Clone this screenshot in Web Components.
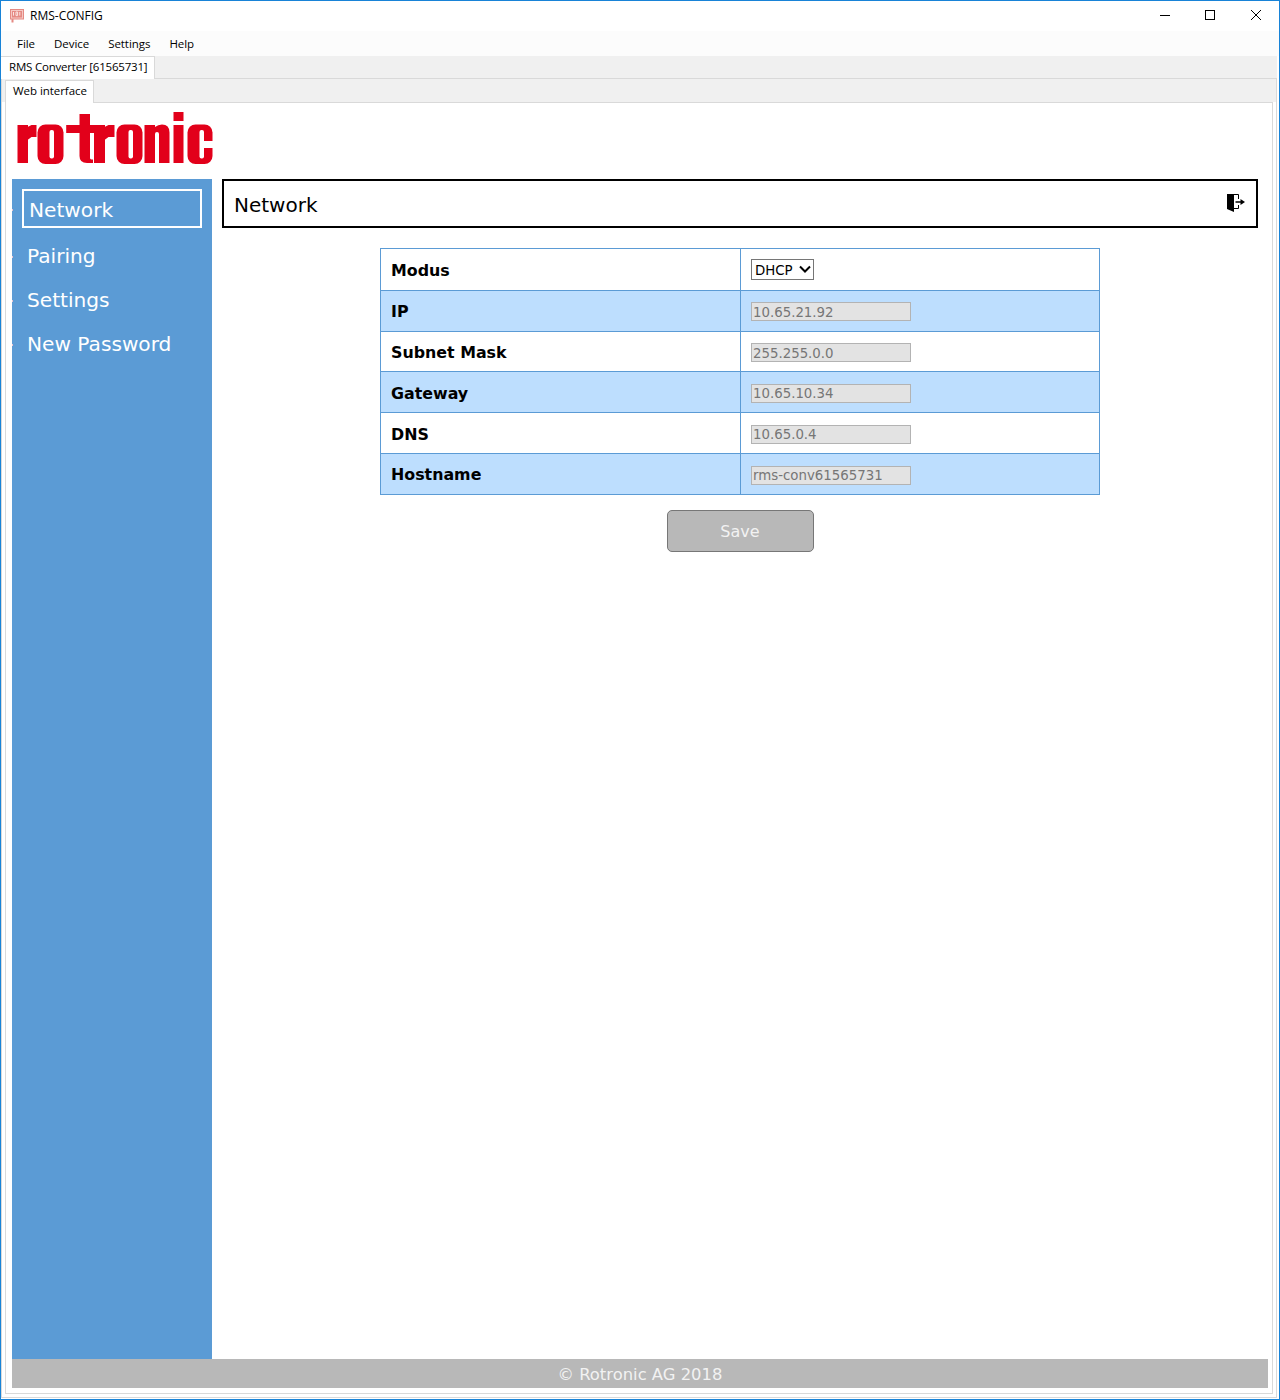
<!DOCTYPE html>
<html lang="en">
<head>
<meta charset="utf-8">
<title>RMS-CONFIG</title>
<style>
    html, body { margin: 0; padding: 0; background: #fff; }
</style>
</head>
<body>
<app-window>
    <title-bar slot="title">RMS-CONFIG</title-bar>
    <menu-bar slot="menu">
        <menu-item>File</menu-item>
        <menu-item>Device</menu-item>
        <menu-item>Settings</menu-item>
        <menu-item>Help</menu-item>
    </menu-bar>
    <tab-panel label="RMS Converter [61565731]" kind="outer">
        <tab-panel label="Web interface" kind="inner">
            <web-page>
                <rotronic-logo slot="logo"></rotronic-logo>
                <side-nav slot="nav">
                    <nav-item active>Network</nav-item>
                    <nav-item>Pairing</nav-item>
                    <nav-item>Settings</nav-item>
                    <nav-item>New Password</nav-item>
                </side-nav>
                <page-header slot="header">Network</page-header>
                <config-table>
                    <config-row label="Modus" style="--h:41px"><select-box>DHCP</select-box></config-row>
                    <config-row label="IP" alt style="--h:40px;--lp:0px"><value-box style="top:0;padding-top:2px">10.65.21.92</value-box></config-row>
                    <config-row label="Subnet Mask" style="--h:39px"><value-box style="padding-top:2px">255.255.0.0</value-box></config-row>
                    <config-row label="Gateway" alt style="--h:40px"><value-box>10.65.10.34</value-box></config-row>
                    <config-row label="DNS" style="--h:40px"><value-box>10.65.0.4</value-box></config-row>
                    <config-row label="Hostname" alt style="--h:40px;--lp:0px"><value-box>rms-conv61565731</value-box></config-row>
                </config-table>
                <save-button>Save</save-button>
                <page-footer slot="footer">© Rotronic AG 2018</page-footer>
            </web-page>
        </tab-panel>
    </tab-panel>
</app-window>

<script>
const UI_FONT = `"Open Sans", "Noto Sans", sans-serif`
const WEB_FONT = `"DejaVu Sans", Verdana, sans-serif`

class AppWindow extends HTMLElement {
    constructor() {
        super()
        this.attachShadow({mode: 'open'}).innerHTML = `
        <style>
            :host {
                display: flex;
                flex-direction: column;
                box-sizing: border-box;
                width: 1280px;
                height: 1400px;
                border: 1px solid #1883d7;
                background: #fff;
                overflow: hidden;
                font-family: ${UI_FONT};
            }
            .body { flex: 1; min-height: 0; display: flex; flex-direction: column; background: #fff; }
        </style>
        <slot name="title"></slot>
        <slot name="menu"></slot>
        <div class="body"><slot></slot></div>`
    }
}

class TitleBar extends HTMLElement {
    constructor() {
        super()
        this.attachShadow({mode: 'open'}).innerHTML = `
        <style>
            :host {
                display: flex;
                align-items: center;
                height: 30px;
                background: #fff;
                color: #000;
                font-size: 12px;
            }
            .app { width: 15px; height: 15px; margin: 0 5px 0 9px; }
            .text { flex: 1; position: relative; top: -1px; }
            .btn { width: 45px; height: 30px; margin-right: 1px; display: flex; align-items: center; justify-content: center; position: relative; top: -1px; }
            .btn svg { width: 12px; height: 12px; display: block; }
            .btn.min { margin-right: 0; }
        </style>
        <svg class="app" viewBox="0 0 15 15">
            <rect x="0.5" y="0.5" width="13" height="9.5" fill="#f6c9c5" stroke="#e58a83"/>
            <rect x="2" y="2" width="10" height="6.5" fill="#e58a83"/>
            <path d="M3.5 3v3.6M6 3h1.6v3.6H6zM9.8 3v3.6" stroke="#fbe6e4" fill="none"/>
            <rect x="1.5" y="10" width="2" height="3.5" fill="#e58a83"/>
        </svg>
        <span class="text"><slot></slot></span>
        <div class="btn min"><svg viewBox="0 0 12 12"><path d="M1 6.500h10" stroke="#000" fill="none"/></svg></div>
        <div class="btn"><svg viewBox="0 0 12 12"><rect x="1.500" y="1.500" width="9" height="9" stroke="#000" fill="none"/></svg></div>
        <div class="btn"><svg viewBox="0 0 12 12"><path d="M1 1l10 10M11 1L1 11" stroke="#000" fill="none"/></svg></div>`
    }
}

class MenuBar extends HTMLElement {
    constructor() {
        super()
        this.attachShadow({mode: 'open'}).innerHTML = `
        <style>
            :host {
                display: flex;
                align-items: center;
                height: 25px;
                padding-left: 6.5px;
                background: #fcfcfc;
            }
        </style>
        <slot></slot>`
    }
}

class MenuItem extends HTMLElement {
    constructor() {
        super()
        this.attachShadow({mode: 'open'}).innerHTML = `
        <style>
            :host { display: block; padding: 0 9.5px; font-size: 11.5px; letter-spacing: -0.05px; color: #000; }
        </style>
        <slot></slot>`
    }
}

class TabPanel extends HTMLElement {
    constructor() {
        super()
        const root = this.attachShadow({mode: 'open'})
        const inner = this.getAttribute('kind') === 'inner'
        root.innerHTML = `
        <style>
            :host {
                display: flex;
                flex-direction: column;
                flex: 1;
                min-height: 0;
                ${inner ? '' : 'margin: 0 2px 1px 0;'}
            }
            .strip {
                display: flex;
                box-sizing: border-box;
                height: ${inner ? 23 : 22}px;
                padding: ${inner ? '1px 3px 0' : '0'};
                background: #f0f0f0;
            }
            .tab {
                display: flex;
                align-items: center;
                box-sizing: border-box;
                height: 23px;
                padding: 0 ${inner ? 6 : 7}px 4px ${inner ? 7 : 8}px;
                background: #fff;
                border: 1px solid #d9d9d9;
                border-bottom: 0;
                font-size: 11.5px;
                letter-spacing: ${inner ? -0.05 : -0.2}px;
                color: #000;
                position: relative;
                z-index: 1;
                ${inner ? '' : 'border-left: 0;'}
            }
            .panel {
                flex: 1;
                min-height: 0;
                display: flex;
                flex-direction: column;
                background: #fff;
                border: 1px solid #d9d9d9;
                ${inner ? 'margin: 0 3px 3px;' : ''}
            }
        </style>
        <div class="strip"><div class="tab"></div></div>
        <div class="panel"><slot></slot></div>`
        root.querySelector('.tab').textContent = this.getAttribute('label')
    }
}

class WebPage extends HTMLElement {
    constructor() {
        super()
        this.attachShadow({mode: 'open'}).innerHTML = `
        <style>
            :host {
                display: flex;
                flex-direction: column;
                flex: 1;
                min-height: 0;
                padding: 0 4px 5px 6px;
                background: #fff;
                font-family: ${WEB_FONT};
            }
            .top { height: 76px; flex: none; }
            .columns { flex: 1; min-height: 0; display: flex; }
            main { flex: 1; min-width: 0; display: flex; flex-direction: column; align-items: center; padding: 0 10px; }
            .head { align-self: stretch; margin-bottom: 20px; }
        </style>
        <div class="top"><slot name="logo"></slot></div>
        <div class="columns">
            <slot name="nav"></slot>
            <main>
                <div class="head"><slot name="header"></slot></div>
                <slot></slot>
            </main>
        </div>
        <slot name="footer"></slot>`
    }
}

class RotronicLogo extends HTMLElement {
    constructor() {
        super()
        const red = '#e2001a'
        this.attachShadow({mode: 'open'}).innerHTML = `
        <style>
            :host { display: block; padding: 9px 0 0 5px; }
            svg { display: block; width: 196px; height: 53px; }
        </style>
        <svg viewBox="17.5 112 196 53" role="img" aria-label="rotronic">
            <g fill="${red}">
                <rect x="18" y="125" width="10.5" height="38"/>
                <path d="M28 127l4-2h5v12h-5l-4 3z"/>
                <rect x="38" y="124.5" width="26" height="39.5" rx="8"/>
                <rect x="66.7" y="125" width="30" height="8"/>
                <path d="M80 114h10.5v44q0 1.500 3 1.500v3.500h-6q-7.500 0-7.500-7z"/>
                <rect x="94.500" y="125" width="11" height="38"/>
                <path d="M105 127l4-2h6v12h-6l-4 3z"/>
                <rect x="117" y="124.500" width="26" height="39.500" rx="8"/>
                <path d="M145 125h10.500v2q3-2.500 7-2.500 7.500 0 7.500 8v30.500h-10.500v-29q0-2-2-2t-2 2v29H145z"/>
                <rect x="174" y="125" width="10" height="38"/>
                <rect x="174" y="112" width="10" height="9"/>
                <rect x="188" y="124.500" width="25" height="39.500" rx="8"/>
            </g>
            <g fill="#fff">
                <rect x="50" y="130" width="4.500" height="28.500" rx="2"/>
                <rect x="129" y="130" width="4.500" height="28.500" rx="2"/>
                <rect x="200" y="130" width="4.500" height="28.500" rx="2"/>
                <rect x="204" y="141" width="10" height="7"/>
            </g>
        </svg>`
    }
}

class SideNav extends HTMLElement {
    constructor() {
        super()
        this.attachShadow({mode: 'open'}).innerHTML = `
        <style>
            :host {
                display: flex;
                flex-direction: column;
                flex: none;
                box-sizing: border-box;
                width: 200px;
                height: 100%;
                padding-top: 10px;
                background: #5b9bd5;
            }
        </style>
        <slot></slot>`
    }
}

class NavItem extends HTMLElement {
    constructor() {
        super()
        const active = this.hasAttribute('active')
        this.attachShadow({mode: 'open'}).innerHTML = `
        <style>
            :host {
                display: flex;
                align-items: center;
                box-sizing: border-box;
                position: relative;
                color: #fff;
                font-size: 20.15px;
                ${active
                    ? 'width: 180px; height: 39px; margin: 0 0 6px 10px; padding: 2px 0 0 5px; border: 2px solid #fff;'
                    : 'height: 44px; margin-left: 15px;'}
            }
            :host::before {
                content: "";
                position: absolute;
                left: ${active ? -12 : -15}px;
                top: 50%;
                width: 1px;
                height: 2px;
                background: #e6c4d4;
            }
        </style>
        <slot></slot>`
    }
}

class PageHeader extends HTMLElement {
    constructor() {
        super()
        this.attachShadow({mode: 'open'}).innerHTML = `
        <style>
            :host {
                display: flex;
                align-items: center;
                justify-content: space-between;
                box-sizing: border-box;
                height: 49px;
                padding: 0 11px 0 10px;
                border: 2px solid #000;
                color: #000;
                font-size: 20px;
            }
            span { padding-top: 3px; }
            svg { display: block; width: 18px; height: 18px; position: relative; top: -1px; }
        </style>
        <span><slot></slot></span>
        <svg viewBox="0 0 18 18">
            <path d="M0 0h7v18l-7-3z" fill="#000"/>
            <path d="M1 .5h10.500v4.500M11.500 11v3.500H7" fill="none" stroke="#000"/>
            <path d="M8.500 7.300h5V5l4.500 3-4.500 3V8.700h-5z" fill="#000"/>
        </svg>`
    }
}

class ConfigTable extends HTMLElement {
    constructor() {
        super()
        this.attachShadow({mode: 'open'}).innerHTML = `
        <style>
            :host {
                display: block;
                flex: none;
                box-sizing: border-box;
                width: 720px;
                border: 1px solid #5b9bd5;
            }
        </style>
        <slot></slot>`
    }
}

class ConfigRow extends HTMLElement {
    constructor() {
        super()
        const root = this.attachShadow({mode: 'open'})
        const bg = this.hasAttribute('alt') ? '#bddefe' : '#fff'
        root.innerHTML = `
        <style>
            :host {
                display: grid;
                grid-template-columns: 359px 1fr;
                height: var(--h, 40px);
                border-bottom: 1px solid #5b9bd5;
                background: ${bg};
            }
            :host(:last-child) { border-bottom: 0; }
            .label {
                display: flex;
                align-items: center;
                padding: var(--lp, 2px) 0 0 10px;
                font-size: 15.85px;
                font-weight: bold;
                color: #000;
            }
            .value {
                display: flex;
                align-items: center;
                padding-left: 10px;
                border-left: 1px solid #5b9bd5;
            }
        </style>
        <div class="label"></div>
        <div class="value"><slot></slot></div>`
        root.querySelector('.label').textContent = this.getAttribute('label')
    }
}

class ValueBox extends HTMLElement {
    constructor() {
        super()
        this.attachShadow({mode: 'open'}).innerHTML = `
        <style>
            :host {
                display: flex;
                align-items: center;
                box-sizing: border-box;
                width: 160px;
                height: 19px;
                padding-left: 1px;
                background: #e3e3e3;
                border: 1px solid #b3b3b3;
                color: #767676;
                font-size: 13.33px;
                position: relative;
                top: 1px;
            }
        </style>
        <slot></slot>`
    }
}

class SelectBox extends HTMLElement {
    constructor() {
        super()
        this.attachShadow({mode: 'open'}).innerHTML = `
        <style>
            :host {
                display: flex;
                align-items: center;
                box-sizing: border-box;
                width: 63px;
                height: 21px;
                padding: 1px 0 0 3px;
                background: #fff;
                border: 1px solid #767676;
                color: #000;
                font-size: 13.33px;
            }
            span { flex: 1; }
            svg { display: block; width: 12px; height: 8px; margin-right: 2px; position: relative; top: -1px; }
        </style>
        <span><slot></slot></span>
        <svg viewBox="0 0 12 8"><path d="M1 1.500l5 5 5-5" fill="none" stroke="#000" stroke-width="2"/></svg>`
    }
}

class SaveButton extends HTMLElement {
    constructor() {
        super()
        this.attachShadow({mode: 'open'}).innerHTML = `
        <style>
            :host {
                display: flex;
                align-items: center;
                justify-content: center;
                flex: none;
                box-sizing: border-box;
                width: 147px;
                height: 42px;
                margin-top: 15px;
                background: #b8b8b8;
                border: 1px solid #777;
                border-radius: 5px;
                color: #f2f2f2;
                font-size: 16px;
            }
        </style>
        <slot></slot>`
    }
}

class PageFooter extends HTMLElement {
    constructor() {
        super()
        this.attachShadow({mode: 'open'}).innerHTML = `
        <style>
            :host {
                display: flex;
                align-items: center;
                justify-content: center;
                flex: none;
                box-sizing: border-box;
                height: 29px;
                padding-top: 2px;
                background: #b8b8b8;
                color: #f2f2f2;
                font-size: 16.4px;
            }
        </style>
        <slot></slot>`
    }
}

customElements.define('app-window', AppWindow)
customElements.define('title-bar', TitleBar)
customElements.define('menu-bar', MenuBar)
customElements.define('menu-item', MenuItem)
customElements.define('tab-panel', TabPanel)
customElements.define('web-page', WebPage)
customElements.define('rotronic-logo', RotronicLogo)
customElements.define('side-nav', SideNav)
customElements.define('nav-item', NavItem)
customElements.define('page-header', PageHeader)
customElements.define('config-table', ConfigTable)
customElements.define('config-row', ConfigRow)
customElements.define('value-box', ValueBox)
customElements.define('select-box', SelectBox)
customElements.define('save-button', SaveButton)
customElements.define('page-footer', PageFooter)
</script>
</body>
</html>
